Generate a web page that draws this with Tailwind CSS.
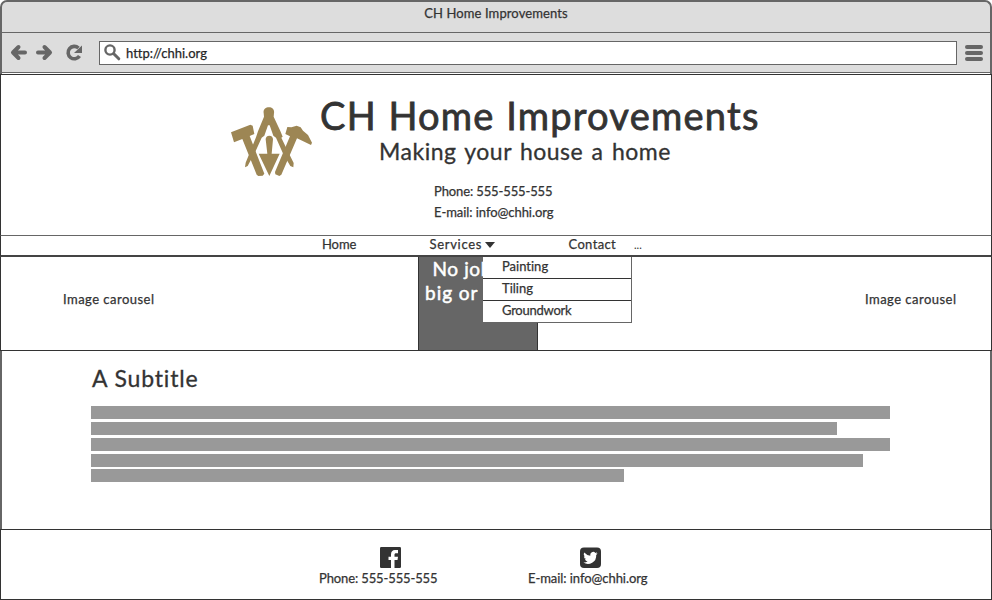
<!DOCTYPE html>
<html lang="en">
<head>
<meta charset="utf-8">
<title>CH Home Improvements</title>
<script src="https://cdn.jsdelivr.net/npm/@tailwindcss/browser@4"></script>
</head>
<body class="bg-white">
<div class="flex h-[600px] w-[992px] flex-col overflow-hidden bg-white font-['Lato','Open_Sans',sans-serif] text-[13px] leading-[20px] text-[#333] font-normal [font-variant-ligatures:none] whitespace-nowrap [-webkit-text-stroke:0.25px_#333]">

  <!-- Browser chrome -->
  <div class="flex h-[74px] shrink-0 flex-col rounded-t-[7px] border-x-2 border-t-2 border-[#666] bg-[#ddd]">
    <div class="flex h-[31px] shrink-0 justify-center border-b border-[#666] pt-px">
      <span class="tracking-[0.1px]">CH Home Improvements</span>
    </div>
    <div class="flex h-[41px] shrink-0 flex-col border-b border-white">
    <div class="flex h-[40px] shrink-0 items-start border-b border-[#666]">
      <svg class="ml-[8px] mt-[11px] h-[18px] w-[76px] shrink-0" viewBox="0 0 76 18" fill="none" stroke="#666" stroke-width="4" stroke-linecap="round" stroke-linejoin="round">
        <path d="M4 8.500h11M8.500 3L3 8.500l5.500 5.500"/>
        <path d="M28 8.500h11M34.500 3l5.500 5.500-5.500 5.500"/>
        <path d="M69.500 12A6.200 6.200 0 1 1 68.500 4" stroke-width="3.600" stroke-linecap="butt"/>
        <path d="M72 1.500v7.500h-8z" fill="#666" stroke="none"/>
      </svg>
      <div class="ml-[13px] mt-[8px] flex h-[24px] w-[858px] shrink-0 items-center border border-[#666] bg-white pl-[4px]">
        <svg class="mt-[-1px] h-[17px] w-[17px] shrink-0" viewBox="0 0 17 17" fill="none" stroke="#666"><circle cx="6" cy="6" r="4.600" stroke-width="2.400"/><path d="M10 10l4.800 4.800" stroke-width="3" stroke-linecap="round"/></svg>
        <span class="ml-[5px] text-[#222]">http://chhi.org</span>
      </div>
      <div class="ml-[8px] mt-[12px] flex flex-col gap-[2px]">
        <div class="h-[4px] w-[18px] rounded-[2px] bg-[#666]"></div>
        <div class="h-[4px] w-[18px] rounded-[2px] bg-[#666]"></div>
        <div class="h-[4px] w-[18px] rounded-[2px] bg-[#666]"></div>
      </div>
    </div>
    </div>
  </div>

  <!-- Header -->
  <header class="h-[161px] shrink-0 border-x border-t border-[#333]">
    <div class="flex pl-[229px]">
      <svg class="mt-[31px] h-[71px] w-[83px] shrink-0" viewBox="30 33 249 213" fill="#9d8654">
        <path d="M147 37C157 37 164 45 162 54L161 65L181 108L188 125L184 128L202 166L221 204L220 217L211 213L190 178L168 128L160 122L149 91L144 91L133 122L125 128L107 168L83 213L75 217L77 203L108 127L114 109L132 65L131 54C129 45 136 37 147 37Z"/>
        <path d="M33 112L91 89L98 92L103 117L89 123L133 236L128 242L115 243L110 239L67 132L42 142Z"/>
        <path d="M202 96L214 97L230 92L242 97L249 107L264 120L276 143L273 150L231 130L184 239L178 243L166 238L165 231L210 124L196 117Z"/>
        <path d="M148 122C155 122 159 127 159 133L155 176L179 176L148 243L116 176L142 176L137 133C137 127 141 122 148 122Z"/>
      </svg>
      <div class="flex flex-col">
        <h1 class="ml-[7px] mt-[16px] h-[48px] text-[38px] leading-[48px] tracking-[1.25px] [word-spacing:0.5px] [-webkit-text-stroke:0.8px_#333]">CH Home Improvements</h1>
        <p class="ml-[66px] h-[24px] text-[23px] leading-[24px] tracking-[0.5px] [word-spacing:2px] [-webkit-text-stroke:0.3px_#333]">Making your house a home</p>
      </div>
    </div>
    <div class="ml-[433px] mt-[4px] flex flex-col leading-[21px]">
      <p class="tracking-[-0.12px]">Phone: 555-555-555</p>
      <p class="tracking-[-0.06px]">E-mail: info@chhi.org</p>
    </div>
  </header>

  <!-- Navigation -->
  <nav class="relative flex h-[22px] shrink-0 border-t border-b-2 border-x border-t-[#666] border-b-[#444] border-x-[#333] leading-[17px]">
    <a class="ml-[321px] w-[107.500px] tracking-[-0.1px]">Home</a>
    <a class="flex w-[139px]"><span class="w-[52.500px] tracking-[0.7px]">Services</span><svg class="ml-[3px] mt-[6px] h-[6px] w-[10px]" viewBox="0 0 10 6" fill="#333"><path d="M0 0h10L5 6z"/></svg></a>
    <a class="w-[65.500px] tracking-[0.35px]">Contact</a>
    <a class="text-[11px] [-webkit-text-stroke:0px]">...</a>
    <!-- Services dropdown -->
    <div class="absolute left-[482px] top-[21px] z-10 flex w-[149px] flex-col border-r border-b border-[#666] bg-white leading-[18px]">
      <div class="h-[22px] border-b border-[#333] pl-[19px]">Painting</div>
      <div class="h-[22px] border-b border-[#333] pl-[19px]">Tiling</div>
      <div class="h-[21px] pl-[19px] tracking-[-0.25px]">Groundwork</div>
    </div>
  </nav>

  <!-- Carousel -->
  <section class="flex h-[94px] shrink-0 border-x border-b border-[#333]">
    <div class="w-[417px] pl-[62px] pt-[32px] tracking-[0.47px]">Image carousel</div>
    <div class="w-[120px] border-x border-[#333] bg-[#666] text-center text-[19px] leading-[24px] text-white [-webkit-text-stroke:0.5px_#fff]"><span class="ml-[4px] tracking-[0.6px]">No job too</span><br><span class="tracking-[0.95px]">big or small</span></div>
    <div class="pl-[327px] pt-[32px] tracking-[0.47px]">Image carousel</div>
  </section>

  <!-- Content -->
  <main class="h-[178px] shrink-0 border-x-2 border-[#666] pl-[89px]">
    <h2 class="ml-px pt-[13px] text-[23px] leading-[28px] tracking-[0.85px] [-webkit-text-stroke:0.3px_#333]">A Subtitle</h2>
    <div class="mt-[14px] flex flex-col gap-[2.85px]">
      <div class="h-[13px] w-[799px] bg-[#999]"></div>
      <div class="h-[13px] w-[746px] bg-[#999]"></div>
      <div class="h-[13px] w-[799px] bg-[#999]"></div>
      <div class="h-[13px] w-[772px] bg-[#999]"></div>
      <div class="h-[13px] w-[533px] bg-[#999]"></div>
    </div>
  </main>

  <!-- Footer -->
  <footer class="flex h-[71px] shrink-0 border border-[#333] pt-[17px]">
    <div class="ml-[318px] flex w-[119px] flex-col">
      <svg class="ml-[60.500px] h-[21px] w-[21px]" viewBox="0 0 21 21"><rect width="21" height="21" rx="1.200" fill="#333"/><path d="M11 21v-8H8.500v-3.200H11V7.500C11 4.700 12.500 3 15 3h3v3.200h-2c-1 0-1.500.5-1.500 1.500v2.100H18l-.5 3.200h-3v8z" fill="#fff"/></svg>
      <p class="tracking-[-0.12px]">Phone: 555-555-555</p>
    </div>
    <div class="ml-[90px] flex w-[120px] flex-col">
      <svg class="ml-[52px] h-[21px] w-[21px]" viewBox="0 0 21 21"><rect width="21" height="20.500" y=".5" rx="4" fill="#333"/><path d="M17.500 6.300l-1.600.5c.6-.4 1-1 1.200-1.600l-1.700.7A3 3 0 0 0 10.300 8.700 8.400 8.400 0 0 1 4.300 5.600a3 3 0 0 0 .9 4l-1.300-.4a3 3 0 0 0 2.300 2.900l-1.300.1a3 3 0 0 0 2.700 2A6 6 0 0 1 3.400 15.500 8.300 8.300 0 0 0 16.200 7.900c.5-.4 1-.9 1.300-1.600z" fill="#fff"/></svg>
      <p class="tracking-[-0.06px]">E-mail: info@chhi.org</p>
    </div>
  </footer>
</div>
</body>
</html>
